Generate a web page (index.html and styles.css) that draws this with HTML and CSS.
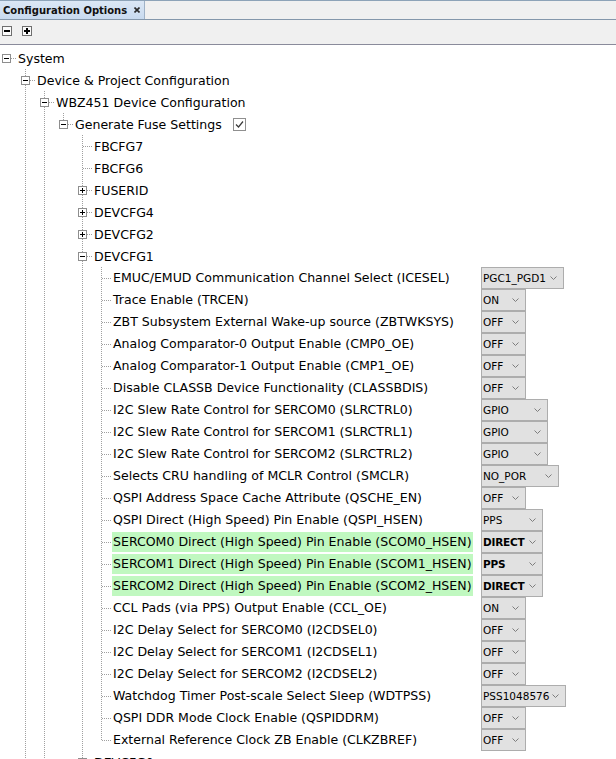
FILE: index.html
```html
<!DOCTYPE html>
<html>
<head>
<meta charset="utf-8">
<link rel="stylesheet" href="styles.css">
</head>
<body>
<div class="tabbar">
  <div class="tab">
    <span class="tab-title">Configuration Options</span>
    <svg class="tab-close" width="6" height="6" viewBox="0 0 6 6"><path d="M0.5 0.5L5.5 5.5M5.5 0.5L0.5 5.5" stroke="#2a2a2a" stroke-width="1.6"/></svg>
  </div>
</div>
<div class="toolbar">
  <svg class="tbtn" width="10" height="10" viewBox="0 0 10 10"><rect x="0.5" y="0.5" width="9" height="9" fill="#fafafa" stroke="#6e6e6e"/><rect x="2" y="4" width="6" height="2" fill="#000"/></svg>
  <svg class="tbtn" width="10" height="10" viewBox="0 0 10 10"><rect x="0.5" y="0.5" width="9" height="9" fill="#fafafa" stroke="#6e6e6e"/><rect x="2" y="4" width="6" height="2" fill="#000"/><rect x="4" y="2" width="2" height="6" fill="#000"/></svg>
</div>
<div class="tree">
<ul class="nodes">
 <li class="node">
  <div class="row"><svg class="exp" width="9" height="9" viewBox="0 0 9 9"><rect x="0.5" y="0.5" width="8" height="8" fill="#fff" stroke="#8e8e8e"/><path d="M2 4.5h5" stroke="#000"/></svg><span>System</span></div>
  <ul class="nodes">
   <li class="node child">
    <div class="row"><svg class="exp" width="9" height="9" viewBox="0 0 9 9"><rect x="0.5" y="0.5" width="8" height="8" fill="#fff" stroke="#8e8e8e"/><path d="M2 4.5h5" stroke="#000"/></svg><span>Device &amp; Project Configuration</span></div>
    <ul class="nodes">
     <li class="node child">
      <div class="row"><svg class="exp" width="9" height="9" viewBox="0 0 9 9"><rect x="0.5" y="0.5" width="8" height="8" fill="#fff" stroke="#8e8e8e"/><path d="M2 4.5h5" stroke="#000"/></svg><span>WBZ451 Device Configuration</span></div>
      <ul class="nodes">
       <li class="node child last">
        <div class="row"><svg class="exp" width="9" height="9" viewBox="0 0 9 9"><rect x="0.5" y="0.5" width="8" height="8" fill="#fff" stroke="#8e8e8e"/><path d="M2 4.5h5" stroke="#000"/></svg><span>Generate Fuse Settings</span><svg class="check" width="13" height="13" viewBox="0 0 13 13"><rect x="0.5" y="0.5" width="12" height="12" fill="#fff" stroke="#8f8f8f"/><path d="M3 6.5L5.5 9L10 3.5" fill="none" stroke="#3a3a3a" stroke-width="1.2"/></svg></div>
        <ul class="nodes">
         <li class="node child"><div class="row"><span class="spacer"></span><span>FBCFG7</span></div></li>
         <li class="node child"><div class="row"><span class="spacer"></span><span>FBCFG6</span></div></li>
         <li class="node child"><div class="row"><svg class="exp" width="9" height="9" viewBox="0 0 9 9"><rect x="0.5" y="0.5" width="8" height="8" fill="#fff" stroke="#8e8e8e"/><path d="M2 4.5h5M4.5 2v5" stroke="#000"/></svg><span>FUSERID</span></div></li>
         <li class="node child"><div class="row"><svg class="exp" width="9" height="9" viewBox="0 0 9 9"><rect x="0.5" y="0.5" width="8" height="8" fill="#fff" stroke="#8e8e8e"/><path d="M2 4.5h5M4.5 2v5" stroke="#000"/></svg><span>DEVCFG4</span></div></li>
         <li class="node child"><div class="row"><svg class="exp" width="9" height="9" viewBox="0 0 9 9"><rect x="0.5" y="0.5" width="8" height="8" fill="#fff" stroke="#8e8e8e"/><path d="M2 4.5h5M4.5 2v5" stroke="#000"/></svg><span>DEVCFG2</span></div></li>
         <li class="node child">
          <div class="row"><svg class="exp" width="9" height="9" viewBox="0 0 9 9"><rect x="0.5" y="0.5" width="8" height="8" fill="#fff" stroke="#8e8e8e"/><path d="M2 4.5h5" stroke="#000"/></svg><span>DEVCFG1</span></div>
          <ul class="nodes">
           <li class="node child"><div class="row"><span class="spacer"></span><span class="cell"><span class="lbl">EMUC/EMUD Communication Channel Select (ICESEL)</span></span><span class="combo w83"><span>PGC1_PGD1</span><svg class="chev" width="7" height="4" viewBox="0 0 7 4"><polyline points="0.5,0.5 3.5,3.5 6.5,0.5" fill="none" stroke="#7d7d7d"/></svg></span></div></li>
           <li class="node child"><div class="row"><span class="spacer"></span><span class="cell"><span class="lbl">Trace Enable (TRCEN)</span></span><span class="combo w45"><span>ON</span><svg class="chev" width="7" height="4" viewBox="0 0 7 4"><polyline points="0.5,0.5 3.5,3.5 6.5,0.5" fill="none" stroke="#7d7d7d"/></svg></span></div></li>
           <li class="node child"><div class="row"><span class="spacer"></span><span class="cell"><span class="lbl">ZBT Subsystem External Wake-up source (ZBTWKSYS)</span></span><span class="combo w45"><span>OFF</span><svg class="chev" width="7" height="4" viewBox="0 0 7 4"><polyline points="0.5,0.5 3.5,3.5 6.5,0.5" fill="none" stroke="#7d7d7d"/></svg></span></div></li>
           <li class="node child"><div class="row"><span class="spacer"></span><span class="cell"><span class="lbl">Analog Comparator-0 Output Enable (CMP0_OE)</span></span><span class="combo w45"><span>OFF</span><svg class="chev" width="7" height="4" viewBox="0 0 7 4"><polyline points="0.5,0.5 3.5,3.5 6.5,0.5" fill="none" stroke="#7d7d7d"/></svg></span></div></li>
           <li class="node child"><div class="row"><span class="spacer"></span><span class="cell"><span class="lbl">Analog Comparator-1 Output Enable (CMP1_OE)</span></span><span class="combo w45"><span>OFF</span><svg class="chev" width="7" height="4" viewBox="0 0 7 4"><polyline points="0.5,0.5 3.5,3.5 6.5,0.5" fill="none" stroke="#7d7d7d"/></svg></span></div></li>
           <li class="node child"><div class="row"><span class="spacer"></span><span class="cell"><span class="lbl">Disable CLASSB Device Functionality (CLASSBDIS)</span></span><span class="combo w45"><span>OFF</span><svg class="chev" width="7" height="4" viewBox="0 0 7 4"><polyline points="0.5,0.5 3.5,3.5 6.5,0.5" fill="none" stroke="#7d7d7d"/></svg></span></div></li>
           <li class="node child"><div class="row"><span class="spacer"></span><span class="cell"><span class="lbl">I2C Slew Rate Control for SERCOM0 (SLRCTRL0)</span></span><span class="combo w67"><span>GPIO</span><svg class="chev" width="7" height="4" viewBox="0 0 7 4"><polyline points="0.5,0.5 3.5,3.5 6.5,0.5" fill="none" stroke="#7d7d7d"/></svg></span></div></li>
           <li class="node child"><div class="row"><span class="spacer"></span><span class="cell"><span class="lbl">I2C Slew Rate Control for SERCOM1 (SLRCTRL1)</span></span><span class="combo w67"><span>GPIO</span><svg class="chev" width="7" height="4" viewBox="0 0 7 4"><polyline points="0.5,0.5 3.5,3.5 6.5,0.5" fill="none" stroke="#7d7d7d"/></svg></span></div></li>
           <li class="node child"><div class="row"><span class="spacer"></span><span class="cell"><span class="lbl">I2C Slew Rate Control for SERCOM2 (SLRCTRL2)</span></span><span class="combo w67"><span>GPIO</span><svg class="chev" width="7" height="4" viewBox="0 0 7 4"><polyline points="0.5,0.5 3.5,3.5 6.5,0.5" fill="none" stroke="#7d7d7d"/></svg></span></div></li>
           <li class="node child"><div class="row"><span class="spacer"></span><span class="cell"><span class="lbl">Selects CRU handling of MCLR Control (SMCLR)</span></span><span class="combo w78"><span>NO_POR</span><svg class="chev" width="7" height="4" viewBox="0 0 7 4"><polyline points="0.5,0.5 3.5,3.5 6.5,0.5" fill="none" stroke="#7d7d7d"/></svg></span></div></li>
           <li class="node child"><div class="row"><span class="spacer"></span><span class="cell"><span class="lbl">QSPI Address Space Cache Attribute (QSCHE_EN)</span></span><span class="combo w45"><span>OFF</span><svg class="chev" width="7" height="4" viewBox="0 0 7 4"><polyline points="0.5,0.5 3.5,3.5 6.5,0.5" fill="none" stroke="#7d7d7d"/></svg></span></div></li>
           <li class="node child"><div class="row"><span class="spacer"></span><span class="cell"><span class="lbl">QSPI Direct (High Speed) Pin Enable (QSPI_HSEN)</span></span><span class="combo w62"><span>PPS</span><svg class="chev" width="7" height="4" viewBox="0 0 7 4"><polyline points="0.5,0.5 3.5,3.5 6.5,0.5" fill="none" stroke="#7d7d7d"/></svg></span></div></li>
           <li class="node child"><div class="row"><span class="spacer"></span><span class="cell"><span class="lbl hl">SERCOM0 Direct (High Speed) Pin Enable (SCOM0_HSEN)</span></span><span class="combo w62 changed"><span>DIRECT</span><svg class="chev" width="7" height="4" viewBox="0 0 7 4"><polyline points="0.5,0.5 3.5,3.5 6.5,0.5" fill="none" stroke="#7d7d7d"/></svg></span></div></li>
           <li class="node child"><div class="row"><span class="spacer"></span><span class="cell"><span class="lbl hl">SERCOM1 Direct (High Speed) Pin Enable (SCOM1_HSEN)</span></span><span class="combo w62 changed"><span>PPS</span><svg class="chev" width="7" height="4" viewBox="0 0 7 4"><polyline points="0.5,0.5 3.5,3.5 6.5,0.5" fill="none" stroke="#7d7d7d"/></svg></span></div></li>
           <li class="node child"><div class="row"><span class="spacer"></span><span class="cell"><span class="lbl hl">SERCOM2 Direct (High Speed) Pin Enable (SCOM2_HSEN)</span></span><span class="combo w62 changed"><span>DIRECT</span><svg class="chev" width="7" height="4" viewBox="0 0 7 4"><polyline points="0.5,0.5 3.5,3.5 6.5,0.5" fill="none" stroke="#7d7d7d"/></svg></span></div></li>
           <li class="node child"><div class="row"><span class="spacer"></span><span class="cell"><span class="lbl">CCL Pads (via PPS) Output Enable (CCL_OE)</span></span><span class="combo w45"><span>ON</span><svg class="chev" width="7" height="4" viewBox="0 0 7 4"><polyline points="0.5,0.5 3.5,3.5 6.5,0.5" fill="none" stroke="#7d7d7d"/></svg></span></div></li>
           <li class="node child"><div class="row"><span class="spacer"></span><span class="cell"><span class="lbl">I2C Delay Select for SERCOM0 (I2CDSEL0)</span></span><span class="combo w45"><span>OFF</span><svg class="chev" width="7" height="4" viewBox="0 0 7 4"><polyline points="0.5,0.5 3.5,3.5 6.5,0.5" fill="none" stroke="#7d7d7d"/></svg></span></div></li>
           <li class="node child"><div class="row"><span class="spacer"></span><span class="cell"><span class="lbl">I2C Delay Select for SERCOM1 (I2CDSEL1)</span></span><span class="combo w45"><span>OFF</span><svg class="chev" width="7" height="4" viewBox="0 0 7 4"><polyline points="0.5,0.5 3.5,3.5 6.5,0.5" fill="none" stroke="#7d7d7d"/></svg></span></div></li>
           <li class="node child"><div class="row"><span class="spacer"></span><span class="cell"><span class="lbl">I2C Delay Select for SERCOM2 (I2CDSEL2)</span></span><span class="combo w45"><span>OFF</span><svg class="chev" width="7" height="4" viewBox="0 0 7 4"><polyline points="0.5,0.5 3.5,3.5 6.5,0.5" fill="none" stroke="#7d7d7d"/></svg></span></div></li>
           <li class="node child"><div class="row"><span class="spacer"></span><span class="cell"><span class="lbl">Watchdog Timer Post-scale Select Sleep (WDTPSS)</span></span><span class="combo w85"><span>PSS1048576</span><svg class="chev" width="7" height="4" viewBox="0 0 7 4"><polyline points="0.5,0.5 3.5,3.5 6.5,0.5" fill="none" stroke="#7d7d7d"/></svg></span></div></li>
           <li class="node child"><div class="row"><span class="spacer"></span><span class="cell"><span class="lbl">QSPI DDR Mode Clock Enable (QSPIDDRM)</span></span><span class="combo w45"><span>OFF</span><svg class="chev" width="7" height="4" viewBox="0 0 7 4"><polyline points="0.5,0.5 3.5,3.5 6.5,0.5" fill="none" stroke="#7d7d7d"/></svg></span></div></li>
           <li class="node child last"><div class="row"><span class="spacer"></span><span class="cell"><span class="lbl">External Reference Clock ZB Enable (CLKZBREF)</span></span><span class="combo w45"><span>OFF</span><svg class="chev" width="7" height="4" viewBox="0 0 7 4"><polyline points="0.5,0.5 3.5,3.5 6.5,0.5" fill="none" stroke="#7d7d7d"/></svg></span></div></li>
          </ul>
         </li>
         <li class="node child"><div class="row"><svg class="exp" width="9" height="9" viewBox="0 0 9 9"><rect x="0.5" y="0.5" width="8" height="8" fill="#fff" stroke="#8e8e8e"/><path d="M2 4.5h5M4.5 2v5" stroke="#000"/></svg><span>DEVCFG0</span></div></li>
        </ul>
       </li>
      </ul>
     </li>
    </ul>
   </li>
  </ul>
 </li>
</ul>
</div>
</body>
</html>
```

FILE: styles.css
```css
* { box-sizing: border-box; }
html, body { margin: 0; padding: 0; }
body {
  width: 616px;
  height: 759px;
  overflow: hidden;
  background: #fff;
  color: #000;
  font-family: "DejaVu Sans", sans-serif;
}
.tabbar {
  height: 20px;
  border-top: 1px solid #8da3b8;
  border-bottom: 1px solid #8497ab;
  background: #f0f0f0;
  display: flex;
}
.tab {
  width: 145px;
  background: linear-gradient(#dbe7f5, #c8daef);
  border-right: 1px solid #9fb2c7;
  display: flex;
  align-items: center;
  padding: 0 4px 0 3px;
  font-weight: bold;
  font-size: 10px;
  color: #101010;
}
.tab-close { margin-left: auto; display: block; }
.toolbar {
  height: 25px;
  border-bottom: 1px solid #8a8b9b;
  background: #f0f0f0;
  display: flex;
  align-items: flex-start;
  padding: 6px 0 0 2px;
  gap: 10px;
}
.tbtn { display: block; }
.tree { padding-top: 2px; }
.nodes { list-style: none; margin: 0; padding: 0; }
.nodes .nodes { padding-left: 19px; }
.node { position: relative; }
.child::before {
  content: "";
  position: absolute;
  left: 6px;
  top: 0;
  bottom: 0;
  width: 1px;
  background: repeating-linear-gradient(to bottom, #a0a0a0 0 1px, transparent 1px 2px);
}
.child.last::before { bottom: auto; height: 12px; }
.row {
  position: relative;
  height: 22px;
  display: flex;
  align-items: center;
  padding-left: 2px;
  white-space: nowrap;
  font-size: 12.55px;
}
.row::after {
  content: "";
  position: absolute;
  left: 7px;
  top: 11px;
  width: 9px;
  height: 1px;
  background: repeating-linear-gradient(to right, #a0a0a0 0 1px, transparent 1px 2px);
}
.exp {
  display: block;
  flex: none;
  align-self: flex-start;
  margin-top: 7px;
  margin-right: 7px;
  position: relative;
  z-index: 1;
}
.spacer { width: 9px; margin-right: 7px; flex: none; }
.check { display: block; flex: none; margin-left: 11px; }
.cell { width: 368px; flex: none; }
.lbl { display: inline-block; line-height: 20px; padding: 0 1px; margin-left: -1px; }
.hl { background: #c0f8c0; }
.combo {
  flex: none;
  height: 22px;
  border: 1px solid #adadad;
  background: #e1e1e1;
  display: flex;
  align-items: center;
  justify-content: space-between;
  padding: 0 6px 0 1px;
  font-size: 10.5px;
}
.combo.changed { font-weight: 600; letter-spacing: -0.2px; }
.chev { display: block; flex: none; }
.w45 { width: 45px; }
.w62 { width: 62px; }
.w67 { width: 67px; }
.w78 { width: 78px; }
.w83 { width: 83px; }
.w85 { width: 85px; }
```
